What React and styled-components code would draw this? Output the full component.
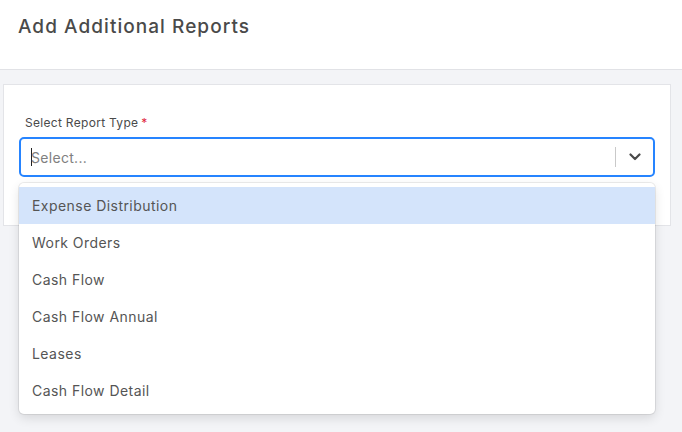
import React from "react";
import styled, { createGlobalStyle } from "styled-components";

const GlobalStyle = createGlobalStyle`
  body {
    margin: 0;
    font-family: "Inter", "Noto Sans", sans-serif;
    background: #f3f4f7;
  }
`;

const Page = styled.div`
  width: 682px;
  height: 432px;
  overflow: hidden;
  background: #f3f4f7;
`;

const Header = styled.div`
  height: 70px;
  background: #fff;
  border-bottom: 1px solid #e1e2e6;
  padding: 15px 18px 0;
  box-sizing: border-box;
`;

const Title = styled.h1`
  margin: 0;
  font-size: 19px;
  line-height: 24px;
  font-weight: 500;
  color: #4a4a4a;
  letter-spacing: 1.05px;
`;

const Body = styled.div`
  padding: 14px 11px 0 3px;
`;

const Card = styled.div`
  position: relative;
  background: #fff;
  border: 1px solid #e3e4e8;
  height: 142px;
  box-sizing: border-box;
  padding: 30px 15px 0 15px;
`;

const Label = styled.div`
  font-size: 12px;
  line-height: 15px;
  letter-spacing: 0.3px;
  color: #4a4a4a;
  margin: 0 0 7px 6px;
`;

const Required = styled.span`
  color: #e0253b;
  margin-left: 3px;
`;

const Control = styled.div`
  display: flex;
  align-items: center;
  height: 40px;
  box-sizing: border-box;
  border: 2px solid #2684ff;
  border-radius: 5px;
  background: #fff;
`;

const ValueArea = styled.div`
  flex: 1;
  display: flex;
  align-items: center;
  padding-left: 10px;
  font-size: 14px;
  letter-spacing: 0.3px;
  color: #808080;
`;

const Caret = styled.span`
  width: 1px;
  height: 18px;
  background: #222;
  margin-right: -1px;
`;

const Separator = styled.span`
  width: 1px;
  height: 20px;
  background: #c9c9c9;
`;

const Indicator = styled.div`
  width: 37px;
  display: flex;
  justify-content: center;
  align-items: center;
  color: #4a4a4a;
`;

const Menu = styled.div`
  position: absolute;
  top: 98px;
  left: 15px;
  right: 15px;
  background: #fff;
  border-radius: 5px;
  box-shadow: 0 0 0 1px rgba(0, 0, 0, 0.07), 0 4px 11px rgba(0, 0, 0, 0.12);
  padding: 4px 0 5px;
`;

const Option = styled.div`
  height: 37px;
  display: flex;
  align-items: center;
  padding-left: 13px;
  font-size: 14px;
  letter-spacing: 0.45px;
  color: #555;
  background: ${(p) => (p.focused ? "#d4e4fb" : "transparent")};
`;

const options = [
  "Expense Distribution",
  "Work Orders",
  "Cash Flow",
  "Cash Flow Annual",
  "Leases",
  "Cash Flow Detail",
];

const App = () => (
  <Page>
    <GlobalStyle />
    <Header>
      <Title>Add Additional Reports</Title>
    </Header>
    <Body>
      <Card>
        <Label>
          Select Report Type<Required>*</Required>
        </Label>
        <Control>
          <ValueArea>
            <Caret />
            Select...
          </ValueArea>
          <Separator />
          <Indicator>
            <svg width="12" height="8" viewBox="0 0 12 8">
              <path d="M1.5 1.5 L6 6 L10.5 1.5" fill="none" stroke="currentColor" strokeWidth="2.2" strokeLinecap="round" strokeLinejoin="round" />
            </svg>
          </Indicator>
        </Control>
        <Menu>
          {options.map((o, i) => (
            <Option key={o} focused={i === 0}>
              {o}
            </Option>
          ))}
        </Menu>
      </Card>
    </Body>
  </Page>
);

export default App;
